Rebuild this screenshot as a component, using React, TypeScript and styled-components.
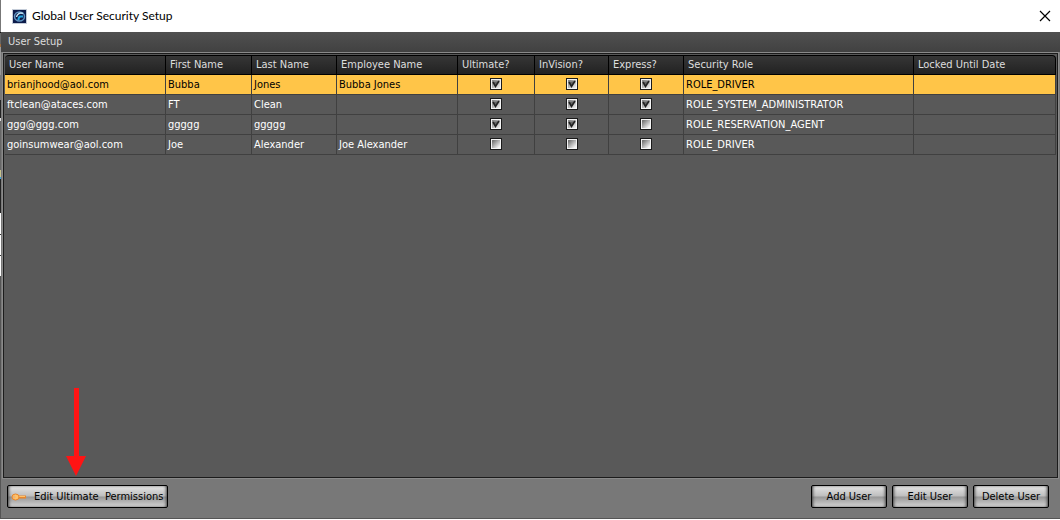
import React from "react";
import styled, { createGlobalStyle } from "styled-components";

const Global = createGlobalStyle`
  * { box-sizing: border-box; }
  html, body { margin: 0; height: 100%; background: #fff; }
  #root { height: 100%; }
  body, button { font-family: "DejaVu Sans Condensed", "Noto Sans", sans-serif; font-size: 11px; }
`;

const Desktop = styled.div`
  display: flex;
  min-height: 100vh;
  padding-bottom: 1px;
`;

const BackdropEdge = styled.div`
  flex: 0 0 1px;
  background: linear-gradient(#777 0 32px, #111 32px 33px, #666 33px 44px, #a06b3c 44px 47px, #999 47px 75px,
    #777 75px 100px, #222 100px 118px, #ddd 118px 121px, #666 121px 170px, #c9c48c 170px 177px, #3aa0dd 177px 179px,
    #222 179px 213px, #fff 213px 234px, #333 234px 235px, #fff 235px 255px, #333 255px 256px, #fff 256px 276px, #555 276px);
`;

const Window = styled.div`
  flex: 1;
  min-width: 0;
  display: flex;
  flex-direction: column;
  background: #787878;
`;

const TitleBar = styled.header`
  display: flex;
  align-items: center;
  height: 32px;
  padding: 0 9px 0 11px;
  gap: 5px;
  background: #fff;
`;

const Title = styled.h1`
  flex: 1;
  margin: 0;
  font: 400 12px/16px Lato, "Noto Sans", sans-serif;
  font-variant-ligatures: none;
  color: #000;
`;

const CloseButton = styled.button`
  display: flex;
  padding: 0;
  border: 0;
  background: none;
`;

const MenuBar = styled.nav`
  height: 20px;
  padding: 0 7px;
  line-height: 20px;
  color: #dcdcdc;
  background: linear-gradient(#505050, #414141);
`;

const GridPanel = styled.main`
  flex: 1;
  margin: 1px 2px 0;
  padding: 1px 1px 0;
  border: 1px solid #1c1c1c;
  outline: 1px solid #8a8a8a;
  background: #595959;
`;

const Table = styled.table`
  width: 100%;
  table-layout: fixed;
  border-collapse: separate;
  border-spacing: 0;
`;

const Col = styled.col<{ $w?: number }>`
  ${(p) => (p.$w ? `width: ${p.$w}px;` : "")}
`;

const Th = styled.th`
  height: 20px;
  padding: 0 4px;
  text-align: left;
  font-weight: 400;
  line-height: 18px;
  white-space: nowrap;
  color: #dedede;
  background: linear-gradient(#363636, #222);
  border: 1px solid #000;
  border-left-width: 0;
  &:first-child { border-top-left-radius: 4px; }
  &:last-child { border-top-right-radius: 4px; }
`;

const Row = styled.tr<{ $selected: boolean }>`
  color: ${(p) => (p.$selected ? "#000" : "#fff")};
  background: ${(p) => (p.$selected ? "#ffc548" : "#595959")};
`;

const Td = styled.td<{ $center?: boolean }>`
  height: 20px;
  padding: 0 2px;
  line-height: 19px;
  white-space: nowrap;
  text-align: ${(p) => (p.$center ? "center" : "left")};
  border: solid #404040;
  border-width: 0 1px 1px 0;
  ${(p) => (p.$center ? "padding-bottom: 1px;" : "")}
`;

const Check = styled.input`
  appearance: none;
  display: block;
  width: 12px;
  height: 12px;
  margin: 0 auto;
  border: 1px solid #1b1b1b;
  box-shadow: inset 0 0 0 1px #f4f4f4;
  background: linear-gradient(135deg, #777 20%, #f2f2f2 80%);
  &:checked {
    background: url("data:image/svg+xml,%3Csvg xmlns='http://www.w3.org/2000/svg' viewBox='0 0 10 10'%3E%3Cpath d='M2 3L4.5 7.5L8 2' fill='%23666' stroke='%23222' stroke-width='1.6'/%3E%3C/svg%3E"),
      linear-gradient(135deg, #888 20%, #f2f2f2 90%);
  }
`;

const Footer = styled.footer`
  display: flex;
  justify-content: space-between;
  height: 41px;
  padding: 7px 11px 0 6px;
  border-bottom: 1px solid #555;
`;

const Group = styled.div`
  position: relative;
  display: flex;
  gap: 5px;
`;

const Button = styled.button<{ $wide?: boolean }>`
  display: flex;
  align-items: center;
  justify-content: ${(p) => (p.$wide ? "flex-start" : "center")};
  gap: 7px;
  width: ${(p) => (p.$wide ? 161 : 76)}px;
  height: 23px;
  padding: ${(p) => (p.$wide ? "0 3px" : "0")};
  line-height: 22px;
  white-space: pre;
  color: #000;
  border: 1px solid #000;
  border-radius: 2px;
  background: linear-gradient(#e4e4e4, #bebebe 48%, #979797 52%, #d4d4d4);
  box-shadow: inset 2px 0 3px -1px #444, inset -2px 0 3px -1px #444;
  svg { flex: none; }
`;

const Arrow = styled.svg`
  position: absolute;
  left: 59px;
  bottom: 42px;
`;

const AppIcon = () => (
  <svg width="15" height="15" viewBox="0 0 15 15" aria-hidden="true">
    <rect width="15" height="15" fill="#c4ccd8" />
    <rect x="1" y="1" width="13" height="13" fill="#0d1b4a" />
    <ellipse cx="7.500" cy="7.500" rx="5" ry="4.500" fill="none" stroke="#5f93c0" strokeWidth="1.500" />
    <path d="M11 4.500C8 3 5 5 4.500 8" fill="none" stroke="#c4e4f4" strokeWidth="1.500" />
    <path d="M11 7.500H8.500C7 7.500 6.500 9 6.500 11" fill="none" stroke="#22a7e0" strokeWidth="2" />
  </svg>
);

const KeyIcon = () => (
  <svg width="16" height="8" viewBox="0 0 16 8" aria-hidden="true">
    <path d="M6 4h9" stroke="#e8862c" strokeWidth="3" />
    <path d="M7 3.500h7" stroke="#ffc36b" strokeWidth="1" />
    <ellipse cx="4.500" cy="4" rx="3.500" ry="3" fill="#ffc36b" stroke="#e8862c" />
    <circle cx="3" cy="4" r="1" fill="#ddd" stroke="#e8862c" strokeWidth="0.500" />
  </svg>
);

const columns: { label: string; width?: number }[] = [
  { label: "User Name", width: 161 },
  { label: "First Name", width: 86 },
  { label: "Last Name", width: 85 },
  { label: "Employee Name", width: 121 },
  { label: "Ultimate?", width: 77 },
  { label: "InVision?", width: 74 },
  { label: "Express?", width: 75 },
  { label: "Security Role", width: 230 },
  { label: "Locked Until Date" },
];

const apps = ["Ultimate", "InVision", "Express"];

const users = [
  { names: ["brianjhood@aol.com", "Bubba", "Jones", "Bubba Jones"], access: [true, true, true], role: "ROLE_DRIVER" },
  { names: ["ftclean@ataces.com", "FT", "Clean", ""], access: [true, true, true], role: "ROLE_SYSTEM_ADMINISTRATOR" },
  { names: ["ggg@ggg.com", "ggggg", "ggggg", ""], access: [true, true, false], role: "ROLE_RESERVATION_AGENT" },
  { names: ["goinsumwear@aol.com", "Joe", "Alexander", "Joe Alexander"], access: [false, false, false], role: "ROLE_DRIVER" },
];

export default function App() {
  return (
    <Desktop>
      <Global />
      <BackdropEdge />
      <Window>
        <TitleBar>
          <AppIcon />
          <Title>Global User Security Setup</Title>
          <CloseButton aria-label="Close">
            <svg width="12" height="12" viewBox="0 0 12 12">
              <path d="M1 1l10 10M11 1L1 11" stroke="#000" strokeWidth="1.2" />
            </svg>
          </CloseButton>
        </TitleBar>
        <MenuBar>User Setup</MenuBar>
        <GridPanel>
          <Table>
            <colgroup>
              {columns.map((c) => <Col key={c.label} $w={c.width} />)}
            </colgroup>
            <thead>
              <tr>{columns.map((c) => <Th key={c.label} scope="col">{c.label}</Th>)}</tr>
            </thead>
            <tbody>
              {users.map((u, r) => (
                <Row key={u.names[0]} $selected={r === 0}>
                  {u.names.map((n, i) => <Td key={i}>{n}</Td>)}
                  {u.access.map((on, i) => (
                    <Td key={apps[i]} $center>
                      <Check type="checkbox" defaultChecked={on} aria-label={`${apps[i]} access for ${u.names[0]}`} />
                    </Td>
                  ))}
                  <Td>{u.role}</Td>
                  <Td />
                </Row>
              ))}
            </tbody>
          </Table>
        </GridPanel>
        <Footer>
          <Group>
            <Arrow width="20" height="90" viewBox="0 0 20 90" aria-hidden="true">
              <path d="M8 2h5v68h7L10 90L0 70h8z" fill="#ff1414" />
            </Arrow>
            <Button $wide><KeyIcon />{"Edit Ultimate  Permissions"}</Button>
          </Group>
          <Group>
            <Button>Add User</Button>
            <Button>Edit User</Button>
            <Button>Delete User</Button>
          </Group>
        </Footer>
      </Window>
    </Desktop>
  );
}
